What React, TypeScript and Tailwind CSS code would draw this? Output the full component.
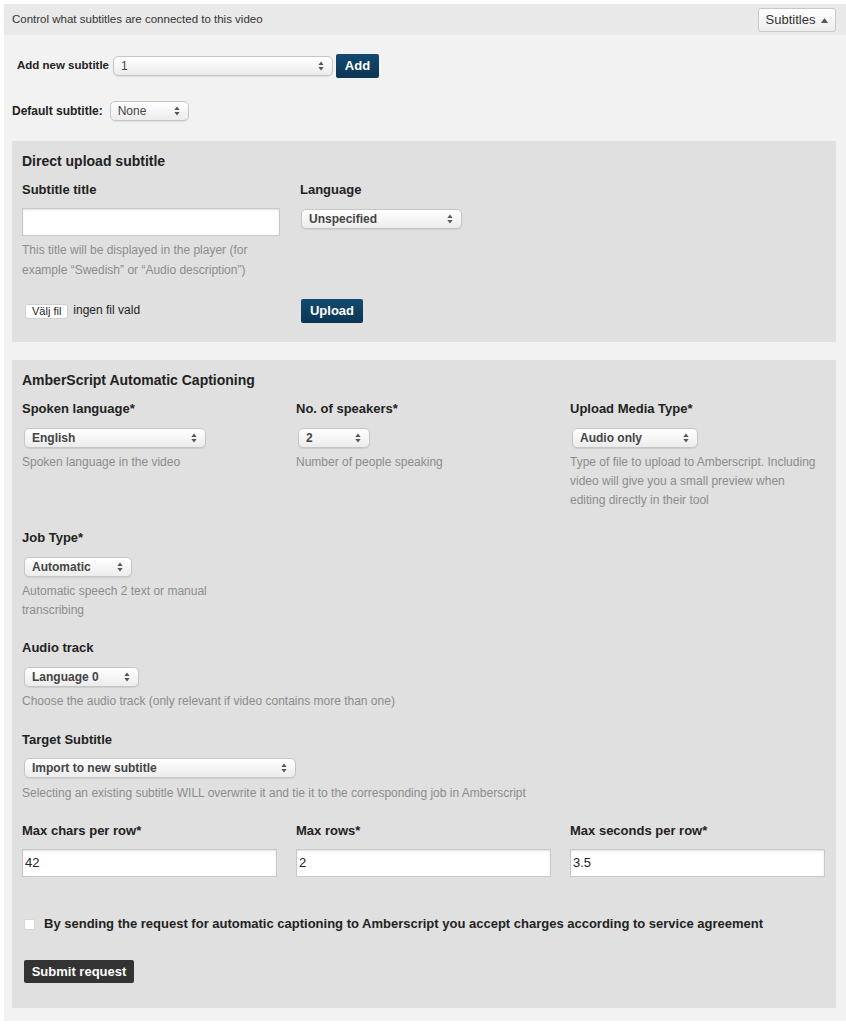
import React from "react";

const Arrows = () => (
  <svg width="6" height="10" viewBox="0 0 6 10" className="shrink-0">
    <path d="M3 0.5 L5.6 4 L0.4 4 Z" fill="#555" />
    <path d="M3 9.5 L5.6 6 L0.4 6 Z" fill="#555" />
  </svg>
);

function Sel({ value, w, bold = true, className = "" }: { value: string; w: string; bold?: boolean; className?: string }) {
  return (
    <div
      className={`${w} ${className} h-5 flex items-center justify-between pl-[7px] pr-[8px] rounded-[5px] border border-[#c6c6c6] bg-gradient-to-b from-white to-[#ececec] shadow-[0_1px_1px_rgba(0,0,0,0.08)] text-[12px] text-[#444] ${bold ? "font-bold" : "font-normal"}`}
    >
      <span>{value}</span>
      <Arrows />
    </div>
  );
}

const Label = ({ children }: { children: React.ReactNode }) => (
  <div className="h-5 leading-5 text-[13px] font-bold text-[#222]">{children}</div>
);

const Help = ({ children, className = "" }: { children: React.ReactNode; className?: string }) => (
  <div className={`text-[12px] leading-[19px] text-[#8c8c8c] ${className}`}>{children}</div>
);

const TextInput = ({ value, w }: { value: string; w: string }) => (
  <div className={`${w} h-[28px] bg-white border border-[#c9c9c9] shadow-[inset_0_1px_2px_rgba(0,0,0,0.12)] flex items-center px-[2px] text-[13px] text-[#222]`}>
    {value}
  </div>
);

export default function App() {
  return (
    <div className="w-[846px] min-h-[1024px] bg-white pt-[4px] pl-[4px]" style={{ fontFamily: '"Liberation Sans", Arial, Helvetica, sans-serif' }}>
      <div className="w-[842px] bg-[#f2f2f2] pb-[13px]">
        {/* header */}
        <div className="h-[31px] bg-[#e9e9e9] flex items-center justify-between pl-[8px] pr-[10px]">
          <span className="text-[11.5px] text-[#333]">Control what subtitles are connected to this video</span>
          <div className="h-[24px] w-[78px] mt-[1px] flex items-center justify-center gap-[6px] rounded-[3px] border border-[#c8c8c8] bg-gradient-to-b from-white to-[#ededed] text-[13px] text-[#333]">
            <span>Subtitles</span>
            <svg width="7" height="5" viewBox="0 0 7 5"><path d="M3.5 0 L7 5 L0 5 Z" fill="#555" /></svg>
          </div>
        </div>

        {/* add new subtitle */}
        <div className="mt-[19px] pl-[13px] flex items-center h-[24px]">
          <span className="w-[96px] text-[11.5px] font-bold text-[#222]">Add new subtitle</span>
          <Sel value="1" w="w-[220px]" bold={false} className="text-[#333]" />
          <div className="ml-[3px] h-[24px] w-[43px] rounded-[2px] bg-gradient-to-b from-[#134a70] to-[#0b3653] text-white text-[13px] font-bold flex items-center justify-center">Add</div>
        </div>

        <div className="mt-[23px] pl-[8px] flex items-center h-5">
          <span className="text-[12px] font-bold text-[#222] mr-[7px]">Default subtitle:</span>
          <Sel value="None" w="w-[79px]" bold={false} className="text-[#333]" />
        </div>

        {/* direct upload */}
        <div className="mt-[20px] ml-[8px] mr-[10px] bg-[#e0e0e0] pt-[10px] pb-[19px] px-[10px]">
          <div className="h-5 leading-5 text-[14px] font-bold text-[#222]">Direct upload subtitle</div>
          <div className="mt-[9px] flex">
            <div className="w-[278px]">
              <Label>Subtitle title</Label>
              <div className="mt-[8px]"><TextInput value="" w="w-[258px]" /></div>
              <div className="mt-[4px] text-[12px] leading-5 text-[#8c8c8c] w-[258px]">
                This title will be displayed in the player (for example “Swedish” or “Audio description”)
              </div>
              <div className="mt-[19px] h-[24px] flex items-center pl-[3px]">
                <div className="h-[15px] px-[6px] bg-white rounded-[3px] border border-[#d0d0d0] text-[11px] leading-[13px] text-[#222] flex items-center">Välj fil</div>
                <span className="ml-[5px] text-[12px] text-[#222] -mt-[3px]">ingen fil vald</span>
              </div>
            </div>
            <div>
              <Label>Language</Label>
              <Sel value="Unspecified" w="w-[161px]" className="mt-[9px] ml-[1px]" />
              <div className="mt-[70px] ml-[1px] h-[24px] w-[62px] rounded-[2px] bg-gradient-to-b from-[#134a70] to-[#0b3653] text-white text-[13px] font-bold flex items-center justify-center">Upload</div>
            </div>
          </div>
        </div>

        {/* amberscript */}
        <div className="mt-[18px] ml-[8px] mr-[10px] bg-[#e0e0e0] pt-[10px] pb-[25px] px-[10px]">
          <div className="h-5 leading-5 text-[14px] font-bold text-[#222]">AmberScript Automatic Captioning</div>
          <div className="mt-[9px] grid grid-cols-[274px_274px_256px]">
            <div>
              <Label>Spoken language*</Label>
              <Sel value="English" w="w-[182px]" className="mt-[9px] ml-[2px]" />
              <Help className="mt-[5px]">Spoken language in the video</Help>
            </div>
            <div>
              <Label>No. of speakers*</Label>
              <Sel value="2" w="w-[72px]" className="mt-[9px] ml-[2px]" />
              <Help className="mt-[5px]">Number of people speaking</Help>
            </div>
            <div>
              <Label>Upload Media Type*</Label>
              <Sel value="Audio only" w="w-[126px]" className="mt-[9px] ml-[2px]" />
              <Help className="mt-[5px] w-[251px]">Type of file to upload to Amberscript. Including video will give you a small preview when editing directly in their tool</Help>
            </div>
          </div>

          <div className="mt-[18px]">
            <Label>Job Type*</Label>
            <Sel value="Automatic" w="w-[108px]" className="mt-[9px] ml-[2px]" />
            <Help className="w-[215px] mt-[5px]">Automatic speech 2 text or manual transcribing</Help>
          </div>

          <div className="mt-[18px]">
            <Label>Audio track</Label>
            <Sel value="Language 0" w="w-[115px]" className="mt-[9px] ml-[2px]" />
            <Help className="mt-[5px]">Choose the audio track (only relevant if video contains more than one)</Help>
          </div>

          <div className="mt-[19px]">
            <Label>Target Subtitle</Label>
            <Sel value="Import to new subtitle" w="w-[272px]" className="mt-[8px] ml-[2px]" />
            <Help className="mt-[6px]">Selecting an existing subtitle WILL overwrite it and tie it to the corresponding job in Amberscript</Help>
          </div>

          <div className="mt-[18px] grid grid-cols-[274px_274px_256px]">
            <div>
              <Label>Max chars per row*</Label>
              <div className="mt-[8px]"><TextInput value="42" w="w-[255px]" /></div>
            </div>
            <div>
              <Label>Max rows*</Label>
              <div className="mt-[8px]"><TextInput value="2" w="w-[255px]" /></div>
            </div>
            <div>
              <Label>Max seconds per row*</Label>
              <div className="mt-[8px]"><TextInput value="3.5" w="w-[255px]" /></div>
            </div>
          </div>

          <div className="mt-[37px] h-5 flex items-center pl-[2px]">
            <div className="w-[11px] h-[11px] rounded-[2px] bg-white border border-[#d6d6d6]" />
            <span className="ml-[9px] text-[13px] font-bold text-[#222]">By sending the request for automatic captioning to Amberscript you accept charges according to service agreement</span>
          </div>

          <div className="mt-[26px] ml-[2px] h-[23px] w-[110px] rounded-[2px] bg-[#333] text-white text-[13px] font-bold flex items-center justify-center">Submit request</div>
        </div>
      </div>
    </div>
  );
}
